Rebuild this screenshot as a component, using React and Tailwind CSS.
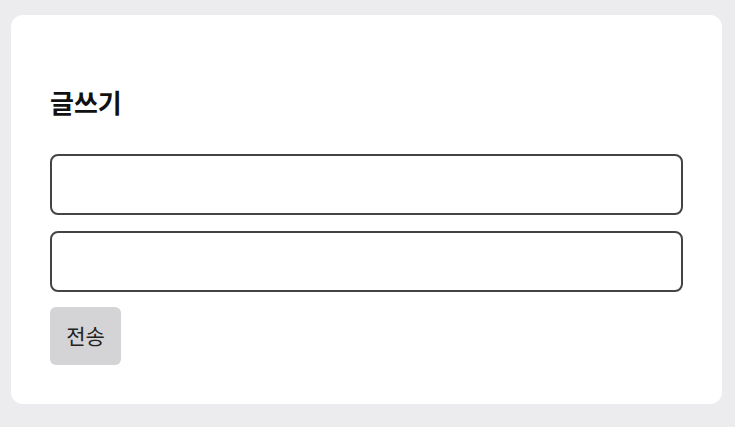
export default function App() {
  return (
    <div className="min-h-[427px] w-[735px] bg-[#ececee] pt-[15px] pl-[11px]" style={{ fontFamily: '"Noto Sans CJK KR", "Noto Sans", sans-serif' }}>
      <div className="w-[711px] h-[389px] bg-white rounded-[12px] px-[39px] pt-[40px]">
        <h2 className="mt-[31px] mb-[36px] text-[26px] font-bold leading-[32px] text-[#111]">글쓰기</h2>
        <div className="flex flex-col gap-[16px]">
          <input className="h-[61px] w-full rounded-[8px] border-[2px] border-[#444] px-4 outline-none" />
          <input className="h-[61px] w-full rounded-[8px] border-[2px] border-[#444] px-4 outline-none" />
        </div>
        <button className="mt-[15px] h-[58px] w-[71px] rounded-[6px] bg-[#d4d3d6] text-[21px] text-[#222]">전송</button>
      </div>
    </div>
  );
}
